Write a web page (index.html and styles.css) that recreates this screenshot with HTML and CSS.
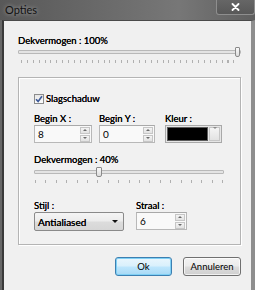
FILE: index.html
```html
<!DOCTYPE html>
<html lang="nl">
<head>
  <meta charset="UTF-8">
  <title>Opties</title>
  <link rel="stylesheet" href="styles.css">
</head>
<body>
  <div class="window">
    <div class="titlebar">
      <span class="title">Opties</span>
      <div class="close">
        <svg width="9" height="8" viewBox="0 0 9 8"><path d="M1.5 1 L7.5 7 M7.5 1 L1.5 7" stroke="#fff" stroke-width="1.8" stroke-linecap="round"/></svg>
      </div>
    </div>

    <div class="body">
      <div class="label">Dekvermogen : 100%</div>
      <div class="slider">
        <div class="track"></div>
        <div class="thumb at-end"></div>
        <div class="ticks fine"></div>
      </div>

      <div class="panel">
        <label class="check">
          <span class="box">
            <svg width="8" height="8" viewBox="0 0 8 8"><path d="M1 4.2 L3.1 6.4 L7 1.2" fill="none" stroke="#3d5a98" stroke-width="1.6"/></svg>
          </span>
          Slagschaduw
        </label>

        <div class="row fields">
          <div class="field w-x">
            <div class="label">Begin X :</div>
            <div class="spin"><span class="val">8</span><span class="arrows"><i class="up"></i><i class="down"></i></span></div>
          </div>
          <div class="field w-y">
            <div class="label">Begin Y :</div>
            <div class="spin"><span class="val">0</span><span class="arrows"><i class="up"></i><i class="down"></i></span></div>
          </div>
          <div class="field w-color">
            <div class="label">Kleur :</div>
            <div class="color"><span class="swatch"></span><span class="drop"><i class="down"></i></span></div>
          </div>
        </div>

        <div class="label opacity">Dekvermogen : 40%</div>
        <div class="slider short">
          <div class="track"></div>
          <div class="thumb at-40"></div>
          <div class="ticks coarse"></div>
        </div>

        <div class="row bottom">
          <div class="field w-style">
            <div class="label">Stijl :</div>
            <div class="select"><span>Antialiased</span><span class="caret"></span></div>
          </div>
          <div class="field w-radius">
            <div class="label">Straal :</div>
            <div class="spin"><span class="val">6</span><span class="arrows"><i class="up"></i><i class="down"></i></span></div>
          </div>
        </div>
      </div>

      <div class="actions">
        <button class="btn primary">Ok</button>
        <button class="btn">Annuleren</button>
      </div>
    </div>
  </div>
</body>
</html>
```

FILE: styles.css
```css
/* Reset */
* {
  margin: 0;
  padding: 0;
  box-sizing: border-box;
}

body {
  width: 255px;
  height: 290px;
  overflow: hidden;
  font-family: Lato, "Noto Sans", sans-serif;
  font-size: 9.5px;
  color: #000;
}

.window {
  height: 290px;
  display: flex;
  flex-direction: column;
  background: #676767;
}

/* title bar */
.titlebar {
  height: 20px;
  display: flex;
  justify-content: space-between;
  background: linear-gradient(to right, #585858, #6c6c6c 45%, #777 70%, #5f5f5f);
}

.title {
  padding: 4px 0 0 5px;
  font-size: 11px;
  line-height: 12px;
  color: #111;
  text-shadow: 0 0 4px rgba(255, 255, 255, 0.55);
}

.close {
  width: 39px;
  height: 15px;
  border: 1px solid #8e8e8e;
  border-top: 0;
  border-radius: 0 0 3px 3px;
  background: linear-gradient(#666, #585858);
  display: flex;
  align-items: center;
  justify-content: center;
}

/* dialog body */
.body {
  flex: 1;
  margin-left: 2px;
  background: #f0f0f0;
  border-left: 2px solid #3a3a3a;
  border-right: 4px solid #8e8e8e;
  border-top: 1px solid #4a4a4a;
  padding: 14px 10px 0 14px;
  display: flex;
  flex-direction: column;
}

.label {
  line-height: 12px;
  white-space: nowrap;
  text-shadow: 0 0 0.4px #000;
}

/* sliders */
.slider {
  position: relative;
  height: 17px;
}

.slider .track {
  position: absolute;
  left: 0;
  right: 0;
  top: 3px;
  height: 4px;
  background: #e4e4e4;
  border: 1px solid #b9b9b9;
  border-radius: 1px;
}

.slider .thumb {
  position: absolute;
  top: 0;
  width: 5px;
  height: 10px;
  background: linear-gradient(#fafafa, #dcdcdc);
  border: 1px solid #8a8a8a;
  border-radius: 1px 1px 2px 2px;
}

.thumb.at-end { right: 1px; }
.thumb.at-40 { left: 62px; width: 6px; }

.slider .ticks {
  position: absolute;
  top: 13px;
  height: 3px;
}

.ticks.fine {
  left: 3px;
  right: 2px;
  background: repeating-linear-gradient(to right, #b0b0b0 0 1px, transparent 1px 5.9px);
}

.ticks.coarse {
  left: 1px;
  right: 1px;
  background: repeating-linear-gradient(to right, #b0b0b0 0 1px, transparent 1px 10.4px);
}

/* group box */
.panel {
  margin-top: 13px;
  border: 1px solid #b4b4b4;
  box-shadow: inset 1px 1px 0 #fff, 1px 1px 0 #fff;
  background: #f1f1f1;
  padding: 15px 0 13px 15px;
  display: flex;
  flex-direction: column;
}

.check {
  display: flex;
  align-items: center;
  gap: 2px;
  height: 11px;
  line-height: 11px;
  text-shadow: 0 0 0.4px #000;
}

.check .box {
  width: 10px;
  height: 10px;
  border: 1px solid #8c8c8c;
  background: linear-gradient(#e6e6e6, #fdfdfd);
  display: flex;
  align-items: center;
  justify-content: center;
}

.row {
  display: flex;
}

.fields {
  margin-top: 9px;
  gap: 7px;
}

.fields .w-color { margin-left: 3px; }

.w-x { width: 58px; }
.w-y { width: 56px; }
.w-color { width: 57px; }
.w-style { width: 90px; }
.w-radius { width: 51px; }

/* spin boxes */
.spin {
  height: 18px;
  border: 1px solid #b8b8b8;
  border-top-color: #a9a9a9;
  background: #f9f9f9;
  display: flex;
  align-items: center;
  justify-content: space-between;
  padding: 0 1px 0 3px;
}

.spin .val {
  line-height: 14px;
  font-size: 10px;
}

.arrows {
  display: flex;
  flex-direction: column;
  gap: 1px;
}

.arrows i,
.drop {
  display: flex;
  align-items: center;
  justify-content: center;
  width: 10px;
  height: 7px;
  border: 1px solid #c6c6c6;
  background: linear-gradient(#f4f4f4, #e2e2e2);
}

i.up::before,
i.down::before {
  content: "";
  border-left: 2px solid transparent;
  border-right: 2px solid transparent;
}

i.up::before { border-bottom: 2px solid #6a6a6a; }
i.down::before { border-top: 2px solid #6a6a6a; }

.drop i.down::before { border-top-color: #8a8a8a; }

/* color picker */
.color {
  height: 18px;
  border: 1px solid #a9a9a9;
  background: #e6e6e6;
  padding: 1px;
  display: flex;
  gap: 1px;
}

.color .swatch {
  flex: 1;
  background: #000;
  border: 1px solid #5c5c5c;
}

.color .drop {
  width: 11px;
  height: auto;
}

.opacity {
  margin-top: 11px;
}

.short {
  width: 190px;
  height: 18px;
  margin-top: 1px;
}

.bottom {
  margin-top: 15px;
  gap: 12px;
}

/* combo box */
.select {
  height: 19px;
  border: 1px solid #8a8a8a;
  border-radius: 2px;
  background: linear-gradient(#f5f5f5 0%, #ececec 48%, #dcdcdc 52%, #d6d6d6 100%);
  display: flex;
  align-items: center;
  justify-content: space-between;
  padding: 0 5px 0 3px;
  font-size: 10px;
  text-shadow: 0 0 0.4px #000;
}

.caret {
  border-left: 3px solid transparent;
  border-right: 3px solid transparent;
  border-top: 3px solid #111;
}

/* buttons */
.actions {
  margin-top: 12px;
  display: flex;
  justify-content: flex-end;
  gap: 11px;
}

.btn {
  width: 58px;
  height: 19px;
  font-family: inherit;
  font-size: 9.5px;
  color: #000;
  border: 1px solid #707070;
  border-radius: 3px;
  background: linear-gradient(#f3f3f3 0%, #ebebeb 48%, #dddddd 52%, #cfcfcf 100%);
  box-shadow: inset 0 0 0 1px rgba(255, 255, 255, 0.7);
}

.btn.primary {
  width: 57px;
  border-color: #3c7fb1;
  background: linear-gradient(#eaf6fd 0%, #d9f0fc 48%, #bee6fd 52%, #a7d9f5 100%);
  box-shadow: inset 0 0 0 1px #7fd0f5;
}
```
